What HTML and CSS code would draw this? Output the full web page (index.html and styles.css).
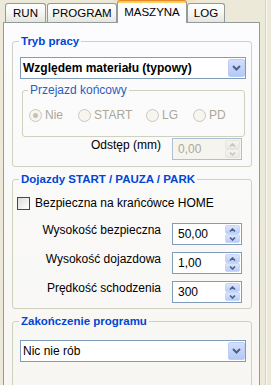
FILE: index.html
```html
<!DOCTYPE html>
<html lang="pl">
<head>
<meta charset="utf-8">
<title>Maszyna</title>
<link rel="stylesheet" href="styles.css">
</head>
<body>
<div class="window">
  <div class="main">
    <div class="tabs">
      <div class="tab tab-run">RUN</div>
      <div class="tab tab-program">PROGRAM</div>
      <div class="tab tab-maszyna active">MASZYNA</div>
      <div class="tab tab-log">LOG</div>
    </div>
    <div class="panel">
      <fieldset class="group group-mode">
        <legend>Tryb pracy</legend>
        <div class="combo combo-bold">
          <span class="combo-text">Względem materiału (typowy)</span>
          <span class="combo-btn"><svg width="9" height="6" viewBox="0 0 9 6"><polyline points="1,1 4.5,4.5 8,1" fill="none" stroke="#4D6185" stroke-width="2"/></svg></span>
        </div>
        <fieldset class="subgroup">
          <legend>Przejazd końcowy</legend>
          <div class="radios">
            <span class="radio checked"><span class="radio-circle"></span>Nie</span>
            <span class="radio"><span class="radio-circle"></span>START</span>
            <span class="radio"><span class="radio-circle"></span>LG</span>
            <span class="radio"><span class="radio-circle"></span>PD</span>
          </div>
        </fieldset>
        <div class="field field-first disabled">
          <span class="field-label">Odstęp (mm)</span>
          <div class="spin">
            <span class="spin-value">0,00</span>
            <span class="spin-btns">
              <span class="spin-btn"><svg width="7" height="4" viewBox="0 0 7 4"><polyline points="1,3.5 3.5,1 6,3.5" fill="none" stroke="#C9C7BA" stroke-width="1.6"/></svg></span>
              <span class="spin-btn"><svg width="7" height="4" viewBox="0 0 7 4"><polyline points="1,0.5 3.5,3 6,0.5" fill="none" stroke="#C9C7BA" stroke-width="1.6"/></svg></span>
            </span>
          </div>
        </div>
      </fieldset>

      <fieldset class="group group-moves">
        <legend>Dojazdy START / PAUZA / PARK</legend>
        <div class="check-row">
          <span class="checkbox"></span>
          <span>Bezpieczna na krańcówce HOME</span>
        </div>
        <div class="fields">
          <div class="field">
            <span class="field-label">Wysokość bezpieczna</span>
            <div class="spin">
              <span class="spin-value">50,00</span>
              <span class="spin-btns">
                <span class="spin-btn"><svg width="7" height="4" viewBox="0 0 7 4"><polyline points="1,3.5 3.5,1 6,3.5" fill="none" stroke="#4D6185" stroke-width="1.6"/></svg></span>
                <span class="spin-btn"><svg width="7" height="4" viewBox="0 0 7 4"><polyline points="1,0.5 3.5,3 6,0.5" fill="none" stroke="#4D6185" stroke-width="1.6"/></svg></span>
              </span>
            </div>
          </div>
          <div class="field">
            <span class="field-label">Wysokość dojazdowa</span>
            <div class="spin">
              <span class="spin-value">1,00</span>
              <span class="spin-btns">
                <span class="spin-btn"><svg width="7" height="4" viewBox="0 0 7 4"><polyline points="1,3.5 3.5,1 6,3.5" fill="none" stroke="#4D6185" stroke-width="1.6"/></svg></span>
                <span class="spin-btn"><svg width="7" height="4" viewBox="0 0 7 4"><polyline points="1,0.5 3.5,3 6,0.5" fill="none" stroke="#4D6185" stroke-width="1.6"/></svg></span>
              </span>
            </div>
          </div>
          <div class="field">
            <span class="field-label">Prędkość schodzenia</span>
            <div class="spin">
              <span class="spin-value">300</span>
              <span class="spin-btns">
                <span class="spin-btn"><svg width="7" height="4" viewBox="0 0 7 4"><polyline points="1,3.5 3.5,1 6,3.5" fill="none" stroke="#4D6185" stroke-width="1.6"/></svg></span>
                <span class="spin-btn"><svg width="7" height="4" viewBox="0 0 7 4"><polyline points="1,0.5 3.5,3 6,0.5" fill="none" stroke="#4D6185" stroke-width="1.6"/></svg></span>
              </span>
            </div>
          </div>
        </div>
      </fieldset>

      <fieldset class="group group-end">
        <legend>Zakończenie programu</legend>
        <div class="combo">
          <span class="combo-text">Nic nie rób</span>
          <span class="combo-btn"><svg width="9" height="6" viewBox="0 0 9 6"><polyline points="1,1 4.5,4.5 8,1" fill="none" stroke="#4D6185" stroke-width="2"/></svg></span>
        </div>
      </fieldset>
    </div>
  </div>
  <div class="side-line"></div>
</div>
</body>
</html>
```

FILE: styles.css
```css
* {
  box-sizing: border-box;
}

html,
body {
  margin: 0;
  padding: 0;
}

body {
  background: #ECE9D8;
  font-family: "Liberation Sans", Arial, sans-serif;
  font-size: 12px;
  color: #000;
  overflow: hidden;
}

.window {
  display: flex;
  height: 385px;
  overflow: hidden;
}

.main {
  margin-left: 3px;
  width: 257px;
  display: flex;
  flex-direction: column;
}

.side-line {
  margin-left: 5px;
  width: 2px;
  border-left: 1px solid #D6D2C1;
  background: #FAF9F3;
}

/* Tabs */
.tabs {
  display: flex;
  align-items: flex-end;
  height: 31px;
  padding-left: 2px;
  background: linear-gradient(#F4E2BE, #F4E2BE) 110px 0 / 82px 2px no-repeat;
}

.tab {
  height: 19px;
  border: 1px solid #919B9C;
  border-bottom: none;
  border-radius: 3px 3px 0 0;
  background: linear-gradient(#FFFFFF, #F6F6F3 50%, #E6E5DD);
  font-size: 11.5px;
  line-height: 14px;
  padding-top: 2px;
  text-align: center;
  white-space: nowrap;
}

.tab + .tab {
  margin-left: 1px;
}

.tab-run { width: 41px; }
.tab-program { width: 70px; }
.tab-maszyna { width: 70px; }
.tab-log { width: 38px; }

.tab.active,
.tab.active + .tab {
  margin-left: 0;
}

.tab.active {
  position: relative;
  z-index: 1;
  height: 23px;
  margin-bottom: -1px;
  border-top: 1px solid #E68B2C;
  background: linear-gradient(#FFC73C, #FFD66E) top / 100% 2px no-repeat, #FCFCFE;
  padding-top: 4px;
}

/* Panel */
.panel {
  height: 380px;
  border: 1px solid #919B9C;
  background: linear-gradient(#FCFCFE, #F7F6F2);
  padding: 11px 7px 0 8px;
}

.group {
  margin: 0;
  min-width: 0;
  border: 1px solid #D0D0BF;
  border-radius: 3px;
  padding: 0 5px 6px 7px;
}

.group + .group {
  margin-top: 5px;
}

.group > legend {
  padding: 0 2px;
  margin-left: -1px;
  font-weight: bold;
  font-size: 11.5px;
  line-height: 14px;
  color: #0046D5;
}

.group-moves {
  padding-bottom: 5px;
}

.group-end {
  padding-bottom: 40px;
}

/* Combo box */
.combo {
  display: flex;
  height: 22px;
  margin-top: 9px;
  border: 1px solid #7F9DB9;
  background: #FFFFFF;
  padding: 1px 0 1px 1px;
}

.group-end .combo {
  margin-top: 12px;
}

.combo-text {
  flex: 1;
  padding-left: 1px;
  line-height: 18px;
  white-space: nowrap;
}

.combo-bold .combo-text {
  font-weight: bold;
}

.combo-btn {
  width: 17px;
  display: flex;
  align-items: center;
  justify-content: center;
  border: 1px solid #BCCDF7;
  border-radius: 2px;
  background: linear-gradient(#D2DFFD, #B4C8F6);
}

/* Sub group */
.subgroup {
  margin: 4px 1px 0 2px;
  min-width: 0;
  border: 1px solid #D0D0BF;
  border-radius: 3px;
  padding: 0 5px 14px 5px;
}

.subgroup > legend {
  padding: 0 2px;
  font-size: 12px;
  line-height: 14px;
  color: #2F5BBE;
}

.radios {
  display: grid;
  grid-template-columns: 49px 68px 47px auto;
  margin: 12px 0 0 1px;
  height: 13px;
  color: #ACA899;
}

.radio {
  display: flex;
  align-items: center;
  gap: 3px;
  line-height: 13px;
}

.radio-circle {
  width: 13px;
  height: 13px;
  border: 1px solid #CAC8BB;
  border-radius: 50%;
  background: #F6F5EE;
  display: flex;
  align-items: center;
  justify-content: center;
}

.radio.checked .radio-circle::after {
  content: "";
  width: 5px;
  height: 5px;
  border-radius: 50%;
  background: #C4C2B4;
}

/* Numeric fields */
.field {
  display: flex;
  justify-content: flex-end;
  align-items: flex-start;
  padding-right: 4px;
}

.field-first {
  margin-top: 1px;
}

.field-label {
  margin-right: 11px;
  line-height: 14px;
  white-space: nowrap;
}

.fields {
  display: flex;
  flex-direction: column;
  gap: 7px;
  margin-top: 13px;
}

.spin {
  display: flex;
  width: 70px;
  height: 22px;
  border: 1px solid #7F9DB9;
  background: #FFFFFF;
  padding: 1px;
}

.spin-value {
  flex: 1;
  padding-left: 4px;
  line-height: 18px;
}

.spin-btns {
  width: 15px;
  display: flex;
  flex-direction: column;
}

.spin-btn {
  flex: 1;
  display: flex;
  align-items: center;
  justify-content: center;
  border: 1px solid #C6D5FA;
  border-radius: 2px;
  background: linear-gradient(#DCE6FD, #BACCF7);
}

.disabled .spin {
  border-color: #AFBFD2;
  background: #F5F4EF;
}

.disabled .spin-value {
  color: #ACA899;
}

.disabled .spin-btn {
  border-color: #E6E5DE;
  background: linear-gradient(#F5F4EE, #EAE9E2);
}

/* Checkbox */
.check-row {
  display: flex;
  align-items: center;
  gap: 5px;
  margin: 11px 0 0 -3px;
  height: 13px;
  line-height: 13px;
}

.checkbox {
  width: 13px;
  height: 13px;
  border: 1px solid #1C5180;
  background: linear-gradient(135deg, #DCDCD7, #FFFFFF);
}
```
